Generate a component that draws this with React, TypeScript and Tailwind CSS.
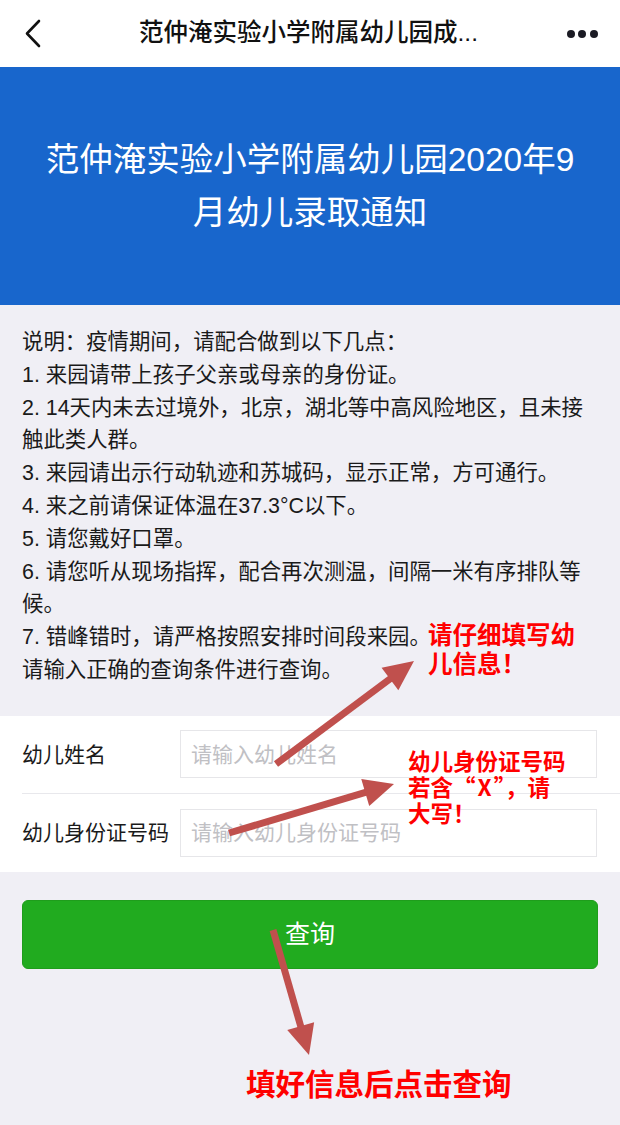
import React from "react";

const ARROW = "#c0504d";

function Arrow({ x1, y1, x2, y2 }: { x1: number; y1: number; x2: number; y2: number }) {
  const dx = x2 - x1;
  const dy = y2 - y1;
  const len = Math.hypot(dx, dy);
  const ux = dx / len;
  const uy = dy / len;
  const head = 30;
  const half = 14;
  const bx = x2 - ux * head;
  const by = y2 - uy * head;
  const pts = `${x2},${y2} ${bx - uy * half},${by + ux * half} ${bx + uy * half},${by - ux * half}`;
  return (
    <g>
      <line x1={x1} y1={y1} x2={bx + ux * 2} y2={by + uy * 2} stroke={ARROW} strokeWidth={7} />
      <polygon points={pts} fill={ARROW} />
    </g>
  );
}

const notes = [
  "说明：疫情期间，请配合做到以下几点：",
  "1. 来园请带上孩子父亲或母亲的身份证。",
  "2. 14天内未去过境外，北京，湖北等中高风险地区，且未接",
  "触此类人群。",
  "3. 来园请出示行动轨迹和苏城码，显示正常，方可通行。",
  "4. 来之前请保证体温在37.3°C以下。",
  "5. 请您戴好口罩。",
  "6. 请您听从现场指挥，配合再次测温，间隔一米有序排队等",
  "候。",
  "7. 错峰错时，请严格按照安排时间段来园。",
  "请输入正确的查询条件进行查询。",
];

function Field({ label, placeholder, border }: { label: string; placeholder: string; border?: boolean }) {
  return (
    <div className={`flex h-[78px] items-center pr-[23px] ${border ? "border-b border-[#e8e8ec]" : ""}`}>
      <div className="w-[158px] shrink-0 text-[21px] text-[#1a1a1a]">{label}</div>
      <div className="flex h-[48px] flex-1 items-center border border-[#e6e6e9] bg-white px-[10px]">
        <span className="text-[21px] text-[#c0c0c4]">{placeholder}</span>
      </div>
    </div>
  );
}

export default function App() {
  return (
    <div className="relative min-h-[1125px] w-[620px] overflow-hidden bg-[#f0eff5] font-['Liberation_Sans','Noto_Sans_CJK_SC',sans-serif]">
      {/* nav bar */}
      <div className="flex h-[67px] items-center justify-between bg-white px-[22px]">
        <svg width="20" height="30" viewBox="0 0 20 30" className="ml-[2px]">
          <path d="M15 2 L3 14.5 L15 27" fill="none" stroke="#111" strokeWidth="2.6" strokeLinecap="round" strokeLinejoin="round" />
        </svg>
        <div className="ml-[6px] text-[24.5px] font-medium text-[#111]">范仲淹实验小学附属幼儿园成...</div>
        <div className="flex items-center gap-[3.5px]">
          <span className="h-[8px] w-[8px] rounded-full bg-[#1b1b24]" />
          <span className="h-[8px] w-[8px] rounded-full bg-[#1b1b24]" />
          <span className="h-[8px] w-[8px] rounded-full bg-[#1b1b24]" />
        </div>
      </div>

      {/* banner */}
      <div className="flex h-[238px] items-center justify-center bg-[#1866cc] px-[30px]">
        <h1 className="text-center text-[33.5px] leading-[53px] text-white">
          范仲淹实验小学附属幼儿园2020年9
          <br />
          月幼儿录取通知
        </h1>
      </div>

      {/* notes */}
      <div className="px-[22px] pt-[21px] pb-[29px] text-[21.4px] leading-[32.8px] text-[#1a1a1a]">
        {notes.map((n) => (
          <div key={n} className="whitespace-nowrap">{n}</div>
        ))}
      </div>

      {/* form */}
      <div className="bg-white pl-[22px]">
        <Field label="幼儿姓名" placeholder="请输入幼儿姓名" border />
        <Field label="幼儿身份证号码" placeholder="请输入幼儿身份证号码" />
      </div>

      <div className="px-[22px] pt-[28px]">
        <button className="flex h-[69px] w-full items-center justify-center rounded-[6px] border border-[#1f9d1c] bg-[#21ab1f] text-[25px] text-white">
          查询
        </button>
      </div>

      {/* annotations */}
      <div className="absolute left-[428px] top-[619px] font-['Noto_Sans_CJK_SC',sans-serif] text-[24.5px] font-bold leading-[29px] text-[#ff0000]">
        请仔细填写幼
        <br />
        儿信息！
      </div>
      <div className="absolute left-[408px] top-[747px] font-['Noto_Sans_CJK_SC',sans-serif] text-[22.5px] font-bold leading-[26px] text-[#ff0000]">
        幼儿身份证号码
        <br />
        若含“<span className="px-[2px]">X</span>”，请
        <br />
        大写！
      </div>
      <div className="absolute left-[246px] top-[1064px] font-['Noto_Sans_CJK_SC',sans-serif] text-[29.5px] font-bold leading-[36px] text-[#ff0000]">
        填好信息后点击查询
      </div>

      <svg className="pointer-events-none absolute left-0 top-0" width="620" height="1125">
        <Arrow x1={276} y1={764} x2={414} y2={661} />
        <Arrow x1={229} y1={833} x2={394} y2={784} />
        <Arrow x1={273} y1={930} x2={309} y2={1055} />
      </svg>
    </div>
  );
}
